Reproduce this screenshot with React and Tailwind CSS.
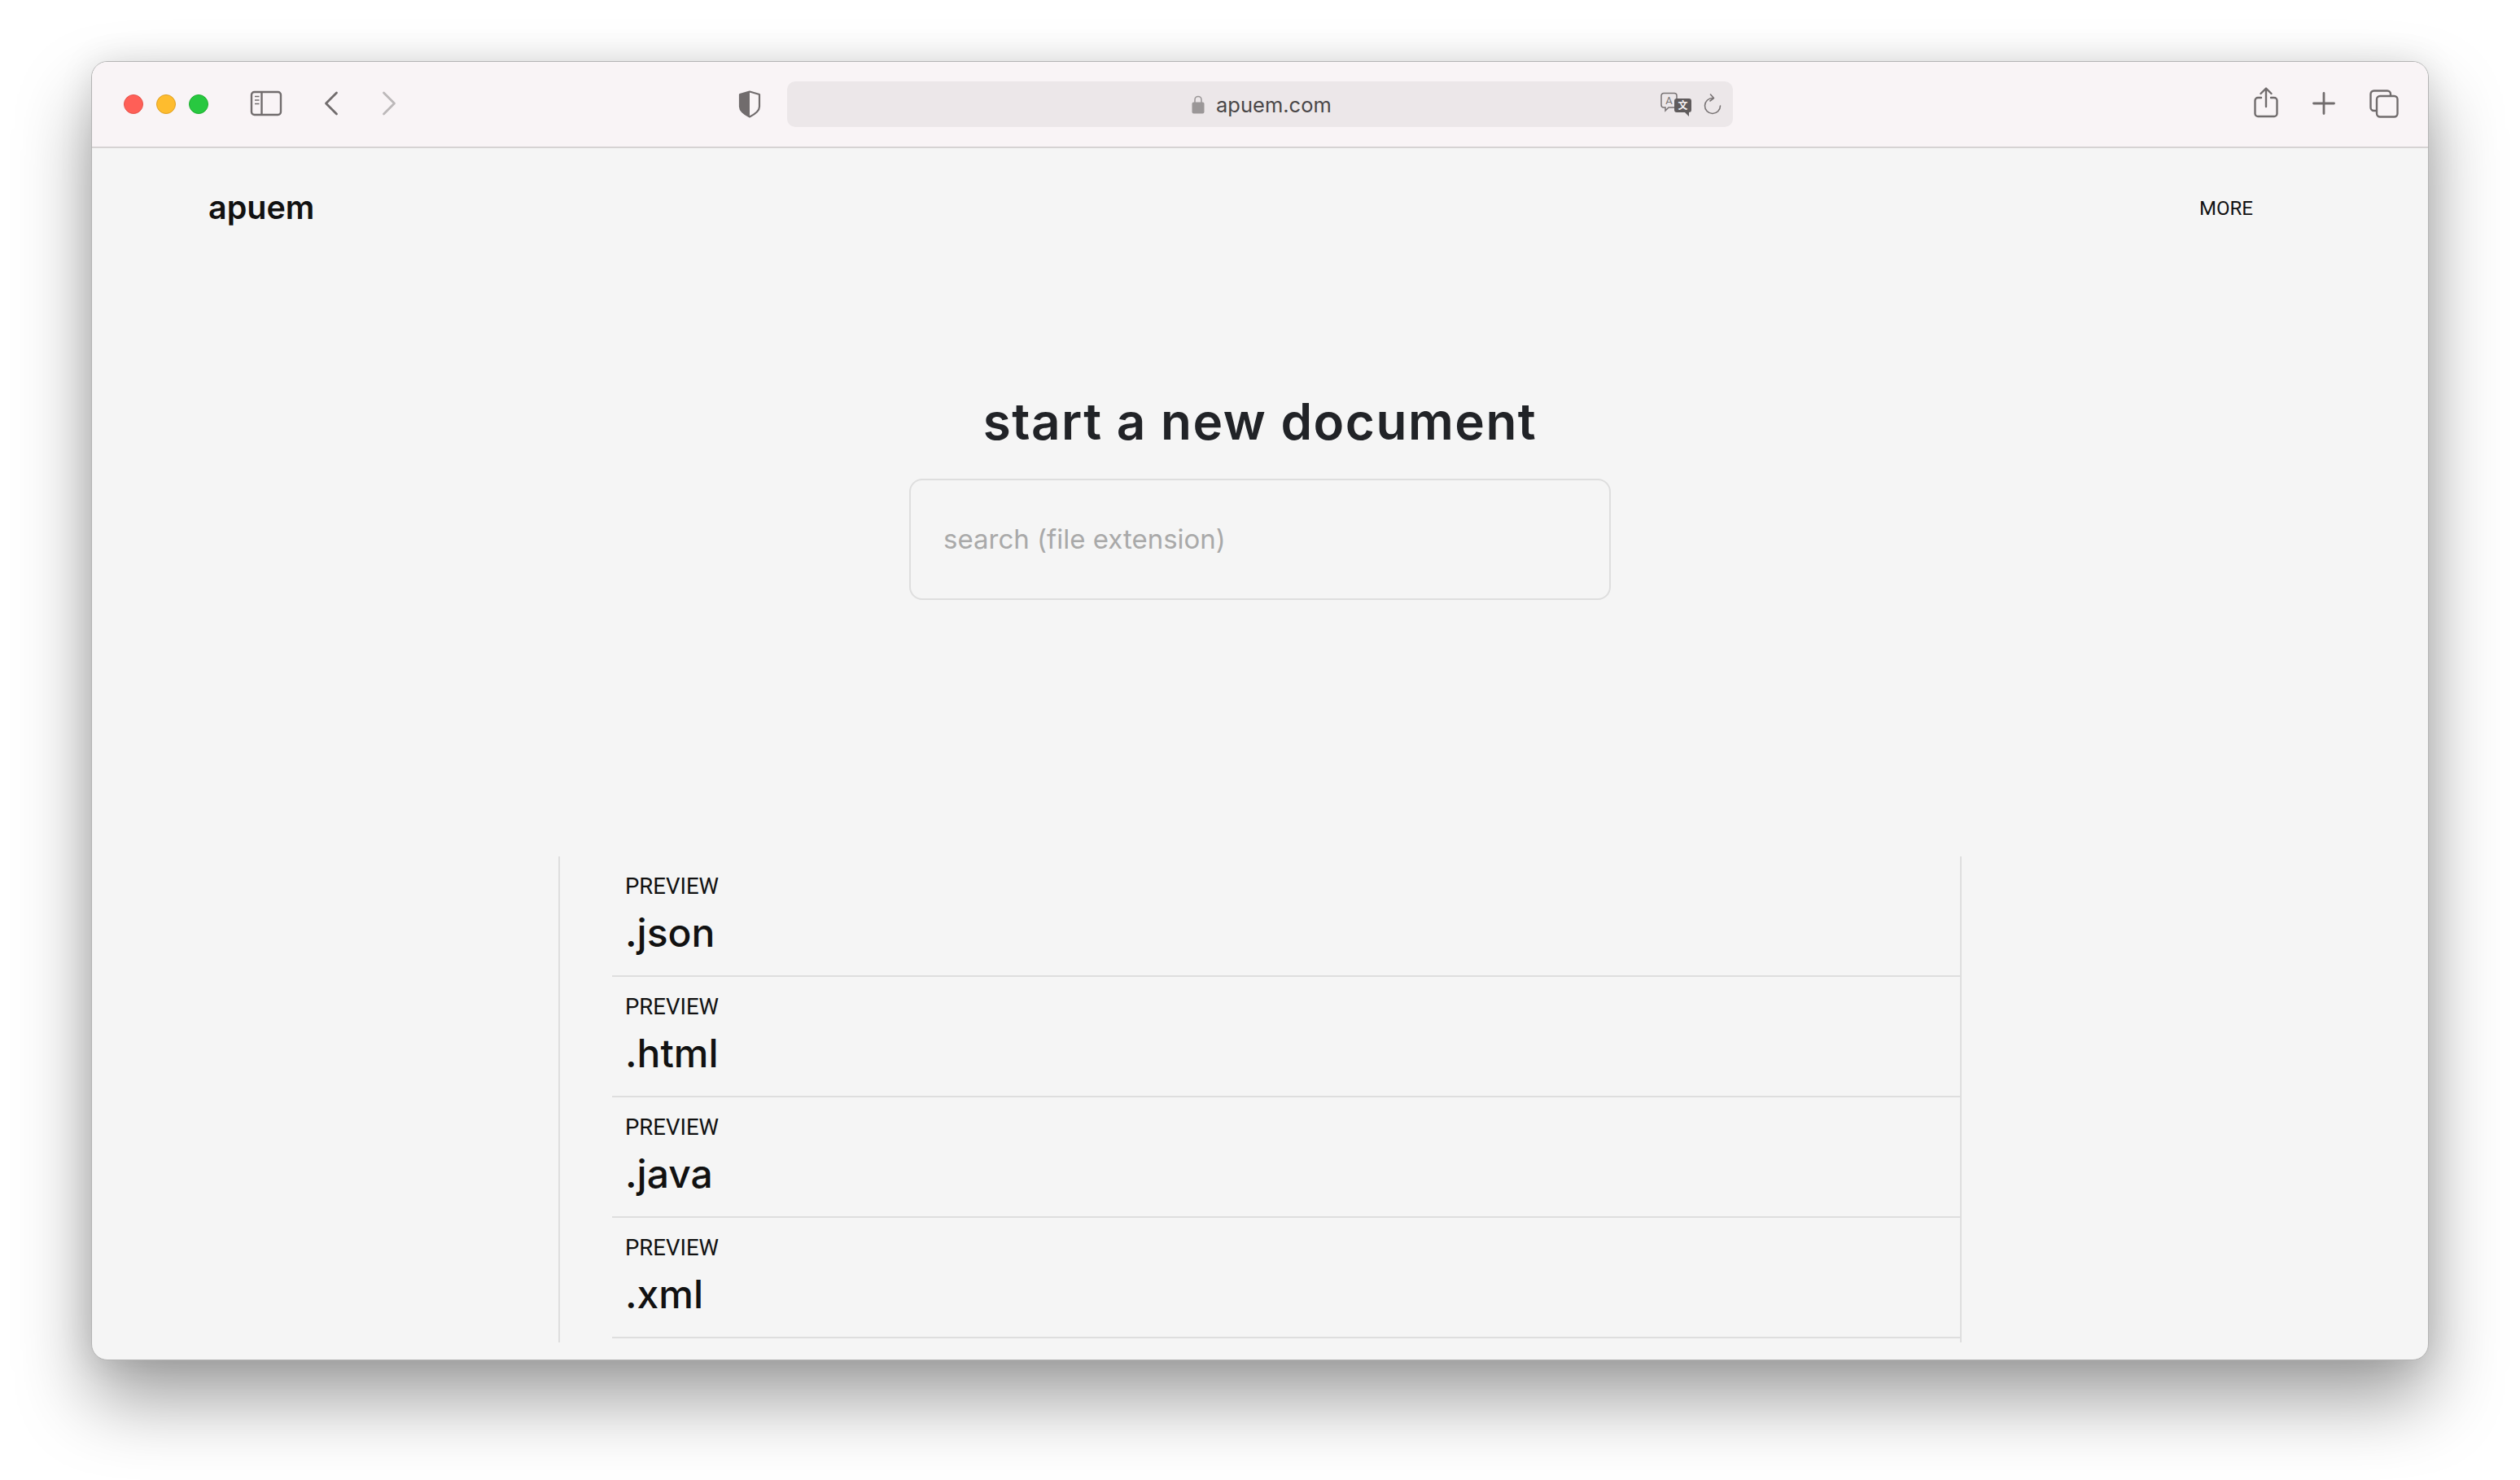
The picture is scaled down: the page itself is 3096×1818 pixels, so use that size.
const ink = "#716c6d";

function Sidebar() {
  return (
    <svg width="40" height="32" viewBox="0 0 40 32" fill="none" stroke={ink} strokeWidth="2.4" className="ml-[51px] shrink-0 -translate-y-[1px]">
      <rect x="2" y="2" width="36" height="28" rx="3.5" />
      <path d="M14.5 2v28" />
      <path d="M6 7.5h5.5M6 12h5.5M6 16.5h5.5" strokeWidth="1.7" />
    </svg>
  );
}
function Chevron({ left, color, cls }) {
  return (
    <svg width="18" height="30" viewBox="0 0 18 30" fill="none" stroke={color} strokeWidth="2.8" strokeLinecap="round" strokeLinejoin="round" className={cls}>
      <path d={left ? "M15.5 2 2.5 15l13 13" : "M2.5 2l13 13-13 13"} />
    </svg>
  );
}
function Shield() {
  return (
    <svg width="28" height="34" viewBox="0 0 28 34" className="ml-[420px] shrink-0">
      <path d="M14 1.5 2 5v15c0 6 6 9.5 12 12.5 6-3 12-6.5 12-12.5V5L14 1.5Z" fill="none" stroke={ink} strokeWidth="2.2" strokeLinejoin="round" />
      <path d="M14 1.5 2 5v15c0 6 6 9.5 12 12.5V1.5Z" fill={ink} />
    </svg>
  );
}
function Lock() {
  return (
    <svg width="16" height="24" viewBox="0 0 16 24" className="shrink-0">
      <path d="M4 11V6.5a4 4 0 0 1 8 0V11" fill="none" stroke="#9b9798" strokeWidth="1.6" />
      <rect x="0.5" y="9.5" width="15" height="14" rx="2" fill="#9b9798" />
    </svg>
  );
}
function Translate() {
  return (
    <svg width="38" height="30" viewBox="0 0 38 30" className="shrink-0">
      <path d="M4 1.5h13a3 3 0 0 1 3 3V16a3 3 0 0 1-3 3H10l-4 4v-4H4a3 3 0 0 1-3-3V4.5a3 3 0 0 1 3-3Z" fill="#ece7e9" stroke="#787374" strokeWidth="1.5" />
      <text x="10.5" y="15" fontSize="13" textAnchor="middle" fill="#787374" fontFamily="Roboto, sans-serif">A</text>
      <path d="M20 8h15a3 3 0 0 1 3 3v11a3 3 0 0 1-3 3v5l-5-5H20a3 3 0 0 1-3-3V11a3 3 0 0 1 3-3Z" fill="#5f5b5c" />
      <text x="27.5" y="21" fontSize="12" textAnchor="middle" fill="#f4f0f1" fontWeight="700" fontFamily="'Noto Sans CJK SC', sans-serif">文</text>
    </svg>
  );
}
function Reload() {
  return (
    <svg width="22" height="26" viewBox="0 0 22 26" fill="none" stroke="#787374" strokeWidth="1.6" strokeLinecap="round" strokeLinejoin="round" className="ml-[15px] shrink-0">
      <path d="M11.5 5.5A9.5 9.5 0 1 0 20.5 15" />
      <path d="M8.5 1 12.5 5.5 8 9" />
    </svg>
  );
}
function Share() {
  return (
    <svg width="30" height="38" viewBox="0 0 30 38" fill="none" stroke={ink} strokeWidth="2.4" strokeLinecap="round" strokeLinejoin="round" className="ml-[640px] shrink-0 -translate-y-[2px]">
      <path d="M9 13H5a3.5 3.5 0 0 0-3.5 3.5v16A3.5 3.5 0 0 0 5 36h20a3.5 3.5 0 0 0 3.5-3.5v-16A3.5 3.5 0 0 0 25 13h-4" />
      <path d="M15 24V2M8.5 8 15 1.5 21.500 8" />
    </svg>
  );
}
function Plus() {
  return (
    <svg width="28" height="28" viewBox="0 0 28 28" fill="none" stroke={ink} strokeWidth="2.8" strokeLinecap="round" className="ml-[42px] shrink-0 -translate-y-[1px]">
      <path d="M14 1.500v25M1.500 14h25" />
    </svg>
  );
}
function Tabs() {
  return (
    <svg width="36" height="35" viewBox="0 0 36 35" fill="none" stroke={ink} strokeWidth="2.4" strokeLinejoin="round" className="ml-[42px] shrink-0 -translate-y-[1px]">
      <path d="M8 26H5.500A4 4 0 0 1 1.500 22V5.500a4 4 0 0 1 4-4H22a4 4 0 0 1 4 4V8" />
      <rect x="9" y="8" width="25.500" height="25.500" rx="4" />
    </svg>
  );
}

const rows = [".json", ".html", ".java", ".xml"];

export default function App() {
  return (
    <div className="w-[3096px] h-[1818px] bg-white pt-[75px] pl-[112px] overflow-hidden">
      <div className="w-[2872px] h-[1596px] rounded-[20px] border border-[#b4b4b4] bg-[#f5f5f5] overflow-hidden flex flex-col shadow-[0_48px_90px_rgba(0,0,0,0.38),0_0_40px_rgba(0,0,0,0.10)]">
        <header className="h-[106px] shrink-0 bg-[#f9f4f6] border-b-2 border-[#d6d3d3] flex items-center pl-[39px]">
          <div className="flex gap-4 shrink-0">
            <span className="w-6 h-6 rounded-full bg-[#ff5f57] border border-[#e5534b]" />
            <span className="w-6 h-6 rounded-full bg-[#febc2e] border border-[#dfa023]" />
            <span className="w-6 h-6 rounded-full bg-[#28c840] border border-[#1fad2f]" />
          </div>
          <Sidebar />
          <Chevron left color={ink} cls="ml-[51px] shrink-0 -translate-y-[1px]" />
          <Chevron color="#bcb8b9" cls="ml-[53px] shrink-0 -translate-y-[1px]" />
          <Shield />
          <div className="ml-[32px] w-[1162px] h-[56px] shrink-0 rounded-[10px] bg-[#ece7e9] flex items-center pl-[497px] pr-[14px]">
            <Lock />
            <span className="ml-[14px] pt-[2px] text-[25.5px] text-[#4a4748] font-['Inter',sans-serif]">apuem.com</span>
            <span className="flex-1" />
            <Translate />
            <Reload />
          </div>
          <Share />
          <Plus />
          <Tabs />
        </header>
        <main className="flex-1 flex flex-col min-h-0 font-['Inter',sans-serif]">
          <nav className="h-[146px] shrink-0 flex items-center justify-between pl-[143px] pr-[215px]">
            <span className="pt-[2px] text-[39.5px] font-semibold text-[#111]">apuem</span>
            <span className="pt-[2px] text-[24px] text-[#111] font-['Roboto',sans-serif]">MORE</span>
          </nav>
          <h1 className="mt-[154px] text-center text-[62px] leading-[72px] tracking-[1.5px] font-semibold text-[#212327]">start a new document</h1>
          <div className="mt-[34px] mx-auto w-[862px] h-[149px] shrink-0 rounded-[16px] border-2 border-[#dedede] flex items-center pl-[40px]">
            <input placeholder="search (file extension)" className="w-full bg-transparent outline-none text-[33px] placeholder:text-[#a9a9a9] text-[#111]" />
          </div>
          <div className="mt-[315px] mx-auto w-[1724px] h-[597px] shrink-0 border-x-2 border-[#dedede] pl-[64px]">
            {rows.map((r) => (
              <div key={r} className="h-[148px] border-b-2 border-[#dedede] pl-[16px] pt-[21px]">
                <div className="text-[27.5px] leading-[32px] text-[#111] font-['Roboto',sans-serif]">PREVIEW</div>
                <div className="mt-[13px] text-[48px] leading-[56px] font-medium text-[#111]">{r}</div>
              </div>
            ))}
          </div>
        </main>
      </div>
    </div>
  );
}
